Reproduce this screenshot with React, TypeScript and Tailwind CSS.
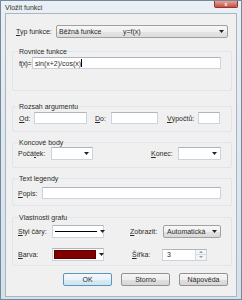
import React from "react";

const Arrow = () => (
  <svg width="5" height="3" viewBox="0 0 5 3" className="shrink-0">
    <path d="M0 0h5L2.5 3z" fill="#222" />
  </svg>
);

const inputCls =
  "h-[12px] bg-white border border-[#cdd3da] border-t-[#aeb5bd]";

function Group({
  title,
  className,
  children,
}: {
  title: string;
  className: string;
  children: React.ReactNode;
}) {
  return (
    <div
      className={`relative w-[220px] ml-[6px] border border-[#dfe5ea] rounded-[2px] ${className}`}
    >
      <span className="absolute -top-[5px] left-[5px] bg-[#f0f0f0] px-[1px] leading-[9px]">
        {title}
      </span>
      {children}
    </div>
  );
}

function Combo({ w, children }: { w: string; children?: React.ReactNode }) {
  return (
    <div
      className={`${w} h-[13px] bg-white border border-[#cdd3da] border-t-[#aeb5bd] flex items-center pl-[1px] pr-[3px] gap-[3px]`}
    >
      <div className="flex-1 flex items-center">{children}</div>
      <Arrow />
    </div>
  );
}

function Button({ label, def }: { label: string; def?: boolean }) {
  return (
    <div
      className={`w-[49px] h-[13px] rounded-[2px] border flex items-center justify-center ${
        def
          ? "border-[#5a95c0] bg-[linear-gradient(#f4f9fc_0%,#e9f3fa_50%,#d9ebf6_50%,#cfe4f2_100%)]"
          : "border-[#939393] bg-[linear-gradient(#f5f5f5_0%,#eeeeee_50%,#e1e1e1_50%,#d6d6d6_100%)]"
      }`}
    >
      {label}
    </div>
  );
}

export default function App() {
  return (
    <div className="w-[242px] h-[300px] flex flex-col border border-[#73899c] bg-[linear-gradient(#e9eff4,#d5e0e9)] font-['Liberation_Sans',Arial,sans-serif] text-[7px] leading-[9px] text-[#2a2a2a]">
      <div className="h-[12px] flex items-start justify-between pl-[4px]">
        <span className="mt-[2px] text-[#333]">Vložit funkci</span>
        <div className="w-[24px] h-[7px] mr-[3px] rounded-b-[2px] border border-t-0 border-[#8a3a30] bg-[linear-gradient(#e7a697,#c9503d)] flex items-center justify-center text-white text-[5px] leading-[5px] font-bold">
          x
        </div>
      </div>

      <div className="flex-1 mx-[4px] mb-[2px] bg-[#f0f0f0] border border-[#a8b6c2] flex flex-col">
        {/* Typ funkce */}
        <div className="flex items-center mt-[11px] ml-[10px] h-[13px]">
          <span className="w-[40px]">
            <u>T</u>yp funkce:
          </span>
          <div className="w-[172px] h-[13px] rounded-[2px] border border-[#a0a0a0] bg-[linear-gradient(#f7f7f7_0%,#f0f0f0_50%,#e5e5e5_50%,#dddddd_100%)] flex items-center pl-[2px] pr-[3px]">
            <span className="w-[64px]">Běžná funkce</span>
            <span className="flex-1">y=f(x)</span>
            <Arrow />
          </div>
        </div>

        <Group title="Rovnice funkce" className="mt-[13px] h-[40px]">
          <div className="flex items-center mt-[5px] ml-[6px]">
            <span className="w-[13px] whitespace-nowrap tracking-[-0.4px]">f(x)=</span>
            <div className={`${inputCls} w-[189px] flex items-center pl-[2px]`}>
              sin(x+2)/cos(x)
              <span className="w-px h-[8px] bg-black" />
            </div>
          </div>
        </Group>

        <Group title="Rozsah argumentu" className="mt-[15px] h-[26px]">
          <div className="flex items-center mt-[5px] ml-[6px]">
            <span className="w-[15px]">
              <u>O</u>d:
            </span>
            <div className={`${inputCls} w-[53px]`} />
            <span className="w-[16px] ml-[8px]">
              <u>D</u>o:
            </span>
            <div className={`${inputCls} w-[47px]`} />
            <span className="w-[31px] ml-[9px]">
              <u>V</u>ýpočtů:
            </span>
            <div className={`${inputCls} w-[22px]`} />
          </div>
        </Group>

        <Group title="Koncové body" className="mt-[10px] h-[26px]">
          <div className="flex items-center mt-[4px] ml-[5px]">
            <span className="w-[33px]">
              Počá<u>t</u>ek:
            </span>
            <Combo w="w-[42px]" />
            <span className="w-[27px] ml-[58px]">
              <u>K</u>onec:
            </span>
            <Combo w="w-[43px]" />
          </div>
        </Group>

        <Group title="Text legendy" className="mt-[10px] h-[28px]">
          <div className="flex items-center mt-[8px] ml-[5px]">
            <span className="w-[24px]">
              <u>P</u>opis:
            </span>
            <div className={`${inputCls} w-[179px]`} />
          </div>
        </Group>

        <Group title="Vlastnosti grafu" className="mt-[11px] h-[49px]">
          <div className="flex items-center mt-[7px] ml-[5px]">
            <span className="w-[34px]">
              <u>S</u>tyl čáry:
            </span>
            <Combo w="w-[52px]">
              <div className="w-[42px] h-px bg-black ml-[1px]" />
            </Combo>
            <span className="w-[33px] ml-[26px]">
              <u>Z</u>obrazit:
            </span>
            <div className="w-[58px] h-[13px] rounded-[2px] border border-[#a0a0a0] bg-[linear-gradient(#f7f7f7_0%,#f0f0f0_50%,#e3e3e3_50%,#d9d9d9_100%)] flex items-center pl-[3px] pr-[3px]">
              <span className="flex-1">Automatická</span>
              <Arrow />
            </div>
          </div>
          <div className="flex items-center mt-[10px] ml-[5px]">
            <span className="w-[34px]">
              <u>B</u>arva:
            </span>
            <Combo w="w-[52px]">
              <div className="w-[42px] h-[9px] bg-[#800000] border border-[#5a0000]" />
            </Combo>
            <span className="w-[30px] ml-[28px]">
              <u>Š</u>ířka:
            </span>
            <div className="w-[45px] h-[12px] bg-white border border-[#cdd3da] border-t-[#aeb5bd] flex">
              <span className="flex-1 pl-[4px] flex items-center">3</span>
              <div className="w-[11px] flex flex-col border-l border-[#d6dbe0]">
                <div className="flex-1 flex items-center justify-center bg-[#f3f5f7] border-b border-[#d6dbe0]">
                  <svg width="4" height="2" viewBox="0 0 4 2">
                    <path d="M0 2h4L2 0z" fill="#999" />
                  </svg>
                </div>
                <div className="flex-1 flex items-center justify-center bg-[#f3f5f7]">
                  <svg width="4" height="2" viewBox="0 0 4 2">
                    <path d="M0 0h4L2 2z" fill="#999" />
                  </svg>
                </div>
              </div>
            </div>
          </div>
        </Group>

        <div className="flex mt-[7px] ml-[57px] gap-[9px]">
          <Button label="OK" def />
          <Button label="Storno" />
          <Button label="Nápověda" />
        </div>
      </div>
    </div>
  );
}
